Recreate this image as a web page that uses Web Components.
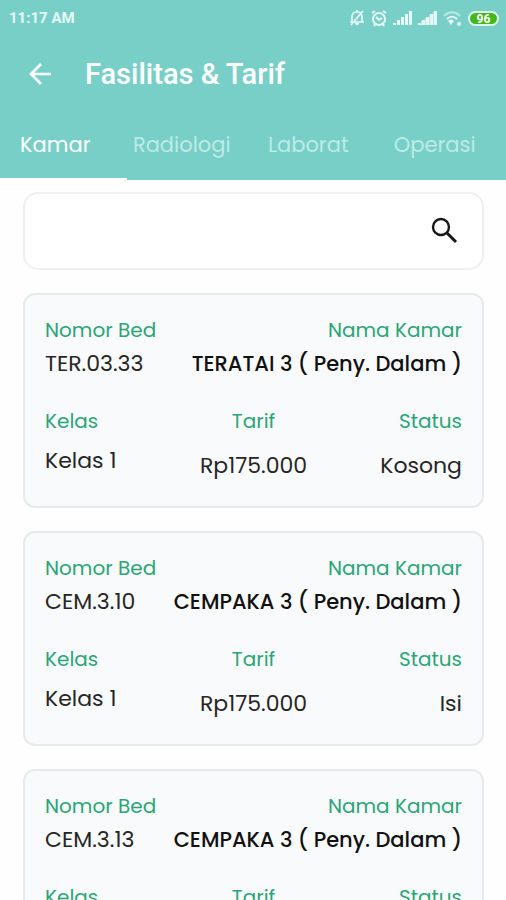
<!DOCTYPE html>
<html lang="id">
<head>
<meta charset="utf-8">
<meta name="viewport" content="width=device-width, initial-scale=1">
<title>Fasilitas &amp; Tarif</title>
<style>
    body {
        margin: 0;
        background: #fefefe;
        font-family: Poppins, Inter, sans-serif;
        color: #262626;
    }
</style>
</head>
<body>
<tarif-app>
    <status-bar slot="header" time="11:17 AM" battery="96"></status-bar>
    <app-toolbar slot="header">Fasilitas &amp; Tarif</app-toolbar>
    <tab-bar slot="header" tabs="Kamar,Radiologi,Laborat,Operasi" active="0"></tab-bar>
    <search-box></search-box>
    <room-card bed="TER.03.33" kelas="Kelas 1" tarif="Rp175.000" status="Kosong">TERATAI 3 ( Peny. Dalam )</room-card>
    <room-card bed="CEM.3.10" kelas="Kelas 1" tarif="Rp175.000" status="Isi">CEMPAKA 3 ( Peny. Dalam )</room-card>
    <room-card bed="CEM.3.13" kelas="Kelas 1" tarif="Rp175.000" status="Isi">CEMPAKA 3 ( Peny. Dalam )</room-card>
</tarif-app>

<script>
class TarifApp extends HTMLElement {
    constructor(){
        super();
        this.shadow = this.attachShadow({mode: 'open'});
    }

    connectedCallback(){
        this.shadow.innerHTML =
        `
        <style>
            :host {
                display: flex;
                flex-direction: column;
                height: 100vh;
            }

            header {
                flex: none;
                background: #78cfc8;
                color: #fff;
            }

            main {
                display: flex;
                flex: 1;
                flex-direction: column;
                gap: 23px;
                min-height: 0;
                overflow-y: auto;
                scrollbar-width: none;
                padding: 12px 22px 24px 23px;
            }
        </style>
        <header><slot name="header"></slot></header>
        <main><slot></slot></main>
        `;
    }
}

class StatusBar extends HTMLElement {
    constructor(){
        super();
        this.shadow = this.attachShadow({mode: 'open'});
    }

    connectedCallback(){
        this.shadow.innerHTML =
        `
        <style>
            :host {
                display: flex;
                align-items: center;
                justify-content: space-between;
                height: 36px;
                padding: 0 7px 0 9px;
                font: 700 15px/20px Roboto, sans-serif;
                color: #e6f8f6;
            }

            .icons {
                display: flex;
                align-items: center;
                gap: 6px;
            }

            svg {
                display: block;
                fill: none;
                stroke: currentColor;
                stroke-width: 2;
            }

            .solid {
                fill: currentColor;
                stroke: none;
            }

            .battery {
                box-sizing: border-box;
                width: 31px;
                height: 15px;
                margin-left: 1px;
                border: 2px solid #e0f6ef;
                border-radius: 8px;
                background: #43b71b;
                color: #fff;
                font-size: 12px;
                line-height: 12px;
                text-align: center;
            }
        </style>
        <span>${this.getAttribute('time')}</span>
        <div class="icons">
            <svg width="16" height="18" viewBox="0 0 16 18" aria-hidden="true">
                <path stroke-width="1.7" d="M1 13h14M3 12V8c0-3 2-5 5-5s5 2 5 5v4l1 1M3 12l-1 1M8 1v2M14 2 2 16"/>
                <path class="solid" d="M6 14h4c0 3-4 3-4 0z"/>
            </svg>
            <svg width="16" height="18" viewBox="0 0 16 18" aria-hidden="true">
                <circle cx="8" cy="10" r="6"/>
                <path d="M1 4l3-2M15 4l-3-2M5 8l3 3 3-2M4 15l-1 2M12 15l1 2"/>
            </svg>
            <svg class="solid" width="19" height="14" viewBox="0 0 19 14" aria-hidden="true">
                <path d="M0 12h3v2H0zM4 9h3v5H4zM8 6h3v8H8zM12 3h3v11h-3zM16 0h3v14h-3z"/>
            </svg>
            <svg class="solid" width="19" height="14" viewBox="0 0 19 14" aria-hidden="true">
                <path d="M0 12h3v2H0zM4 9h3v5H4zM8 6h3v8H8zM12 3h3v11h-3zM16 0h3v14h-3z"/>
                <path opacity=".6" d="M3 10h1v4H3zM7 7h1v7H7zM11 4h1v10h-1zM15 1h1v13h-1z"/>
            </svg>
            <svg width="18" height="16" viewBox="0 0 18 16" aria-hidden="true">
                <path opacity=".6" d="M1 6c5-5 11-5 16 0"/>
                <path d="M4 9c3-3 7-3 10 0"/>
                <path class="solid" d="M5 11c2-2 4-2 6 0l-3 4z"/>
                <circle class="solid" cx="16" cy="14" r="2"/>
            </svg>
            <span class="battery">${this.getAttribute('battery')}</span>
        </div>
        `;
    }
}

class AppToolbar extends HTMLElement {
    constructor(){
        super();
        this.shadow = this.attachShadow({mode: 'open'});
    }

    connectedCallback(){
        this.shadow.innerHTML =
        `
        <style>
            :host {
                display: flex;
                align-items: center;
                gap: 29px;
                height: 76px;
                padding: 0 24px;
            }

            button {
                padding: 0;
                border: 0;
                background: none;
                color: inherit;
                cursor: pointer;
            }

            svg {
                display: block;
            }

            h1 {
                margin: 0;
                font: 500 29px/32px Roboto, sans-serif;
            }
        </style>
        <button type="button" aria-label="Kembali">
            <svg width="32" height="32" viewBox="0 0 32 32" fill="none" stroke="currentColor" stroke-width="2.6">
                <path d="M27 16H7M17 6 7 16l10 10"/>
            </svg>
        </button>
        <h1><slot></slot></h1>
        `;
    }
}

class TabBar extends HTMLElement {
    constructor(){
        super();
        this.shadow = this.attachShadow({mode: 'open'});
    }

    get active() {
        return Number(this.getAttribute('active'));
    }

    connectedCallback(){
        this.render();
    }

    render(){
        const tabs = this.getAttribute('tabs').split(',').map((name, i) =>
            `<button type="button" role="tab" aria-selected="${i === this.active}">${name}</button>`
        ).join('');
        this.shadow.innerHTML =
        `
        <style>
            .tabs {
                display: grid;
                grid-template-columns: repeat(4, 1fr);
                height: 68px;
            }

            button {
                min-width: 0;
                padding: 0 16px 0 0;
                border: 0;
                border-bottom: 2px solid transparent;
                background: none;
                font: 400 21px/28px Poppins, Inter, sans-serif;
                color: #bcebe6;
                cursor: pointer;
            }

            button[aria-selected="true"] {
                border-bottom-color: #fefefe;
                color: #fff;
            }
        </style>
        <div class="tabs" role="tablist">${tabs}</div>
        `;
        this.shadow.querySelectorAll('button').forEach((button, i) => {
            button.addEventListener('click', () => {
                this.setAttribute('active', i);
                this.render();
            });
        });
    }
}

class SearchBox extends HTMLElement {
    constructor(){
        super();
        this.shadow = this.attachShadow({mode: 'open'});
    }

    connectedCallback(){
        this.shadow.innerHTML =
        `
        <style>
            :host {
                display: block;
                flex: none;
            }

            form {
                display: flex;
                align-items: center;
                box-sizing: border-box;
                height: 78px;
                padding: 0 22px;
                border: 2px solid #efefef;
                border-radius: 15px;
                background: #fff;
            }

            input {
                flex: 1;
                min-width: 0;
                height: 48px;
                padding: 0;
                border: 0;
                outline: 0;
                background: none;
                font: inherit;
                font-size: 20px;
            }

            button {
                padding: 0;
                border: 0;
                background: none;
                color: #181818;
                cursor: pointer;
            }

            svg {
                display: block;
            }
        </style>
        <form>
            <input type="text" aria-label="Cari kamar">
            <button type="button" aria-label="Cari">
                <svg width="32" height="32" viewBox="0 0 32 32" fill="none" stroke="currentColor">
                    <circle cx="13" cy="12" r="8" stroke-width="2.4"/>
                    <path d="M18.500 17.500 28 27" stroke-width="3"/>
                </svg>
            </button>
        </form>
        `;
    }
}

class RoomCard extends HTMLElement {
    constructor(){
        super();
        this.shadow = this.attachShadow({mode: 'open'});
    }

    connectedCallback(){
        this.render();
    }

    render(){
        this.shadow.innerHTML =
        `
        <style>
            :host {
                display: block;
                flex: none;
                padding: 23px 20px 28px;
                border: 2px solid #e6eaea;
                border-radius: 12px;
                background: #f8fafb;
                font-size: 20px;
                line-height: 24px;
            }

            dl {
                display: grid;
                margin: 0;
            }

            .room {
                grid-template-columns: auto 1fr;
            }

            .rate {
                grid-template-columns: 1fr auto 1fr;
                margin-top: 33px;
            }

            dt {
                color: #2ba577;
            }

            dd {
                margin: 10px 0 0;
                font-size: 22px;
                white-space: nowrap;
            }

            .rate dd {
                margin-top: 21px;
            }

            .rate .kelas {
                margin-top: 16px;
            }

            .center {
                text-align: center;
            }

            .end {
                text-align: right;
            }

            .name {
                color: #111;
                font-size: 21px;
                font-weight: 500;
            }
        </style>
        <dl class="room">
            <div><dt>Nomor Bed</dt><dd>${this.getAttribute('bed')}</dd></div>
            <div class="end"><dt>Nama Kamar</dt><dd class="name"><slot></slot></dd></div>
        </dl>
        <dl class="rate">
            <div><dt>Kelas</dt><dd class="kelas">${this.getAttribute('kelas')}</dd></div>
            <div class="center"><dt>Tarif</dt><dd>${this.getAttribute('tarif')}</dd></div>
            <div class="end"><dt>Status</dt><dd>${this.getAttribute('status')}</dd></div>
        </dl>
        `;
    }
}

customElements.define('tarif-app', TarifApp);
customElements.define('status-bar', StatusBar);
customElements.define('app-toolbar', AppToolbar);
customElements.define('tab-bar', TabBar);
customElements.define('search-box', SearchBox);
customElements.define('room-card', RoomCard);
</script>
</body>
</html>
